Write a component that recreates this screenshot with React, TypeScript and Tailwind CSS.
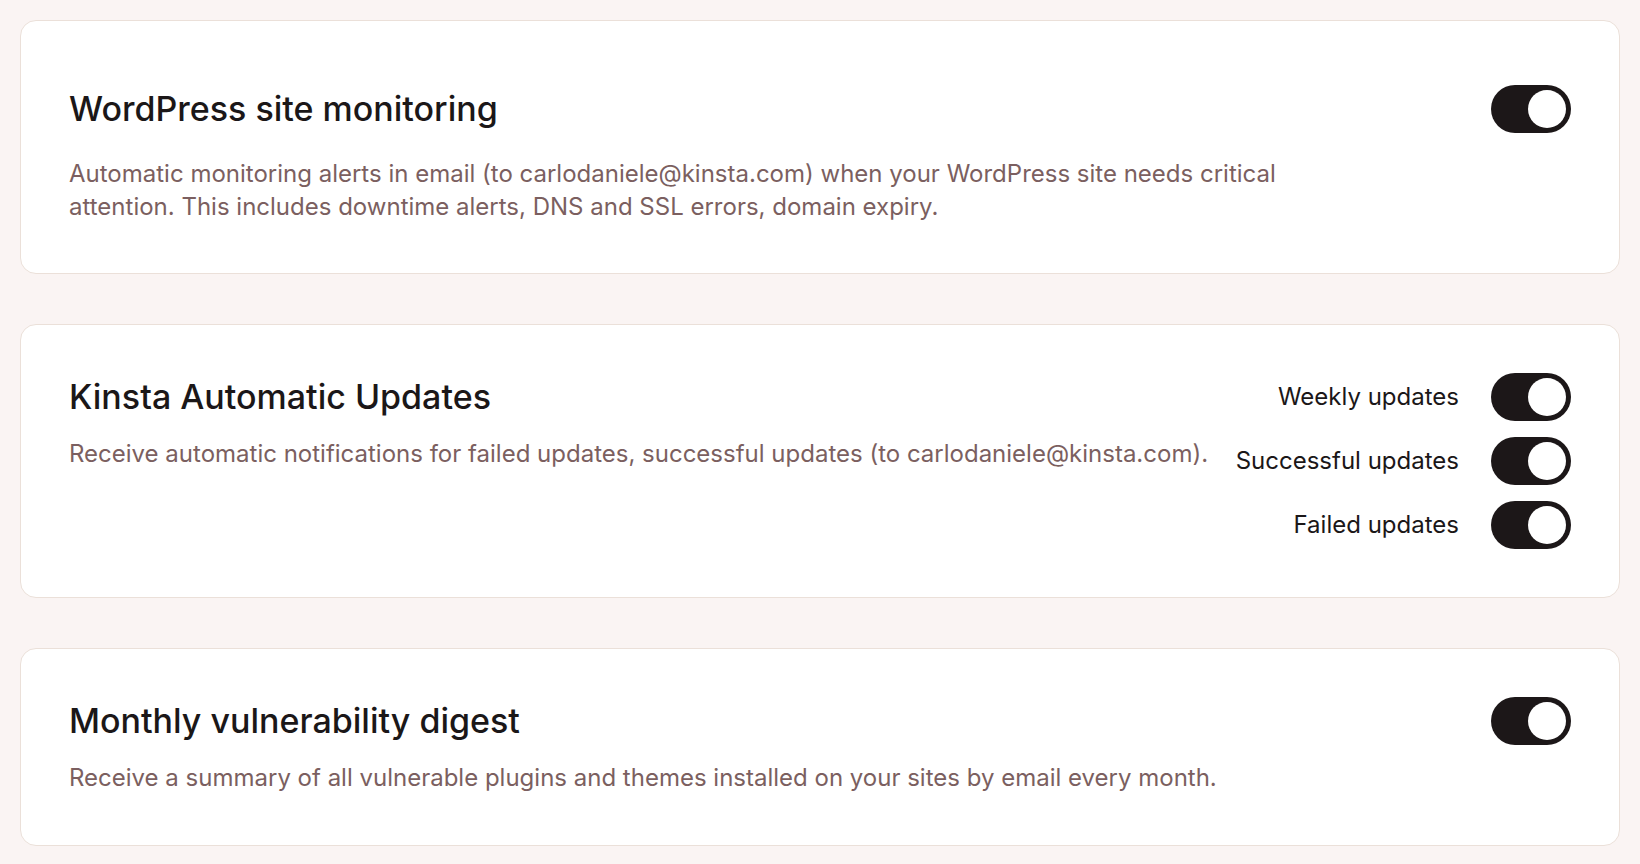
import React, { useState } from 'react';

// Simple on/off switch drawn like the Kinsta settings toggle
const Toggle = ({ on, onChange }: { on: boolean; onChange: () => void }) => (
  <button
    type="button"
    onClick={onChange}
    className={`flex h-12 w-20 shrink-0 items-center rounded-full p-[5px] ${on ? 'justify-end bg-[#1c1718]' : 'justify-start bg-[#d8cdca]'}`}
  >
    <span className="h-[38px] w-[38px] rounded-full bg-white" />
  </button>
);

const App = () => {
  const [monitoring, setMonitoring] = useState(true);
  const [weekly, setWeekly] = useState(true);
  const [successful, setSuccessful] = useState(true);
  const [failed, setFailed] = useState(true);
  const [digest, setDigest] = useState(true);

  const updates = [
    { label: 'Weekly updates', on: weekly, toggle: () => setWeekly(!weekly) },
    { label: 'Successful updates', on: successful, toggle: () => setSuccessful(!successful) },
    { label: 'Failed updates', on: failed, toggle: () => setFailed(!failed) },
  ];

  return (
    <div className="min-h-screen bg-[#faf4f3] p-5 font-['Inter',sans-serif]">
      <div className="flex flex-col gap-[50px]">
        {/* Site monitoring */}
        <div className="rounded-2xl border border-[#ebe0d9] bg-white px-12 pt-16 pb-[50px]">
          <div className="flex items-center justify-between">
            <h2 className="text-[34px] leading-10 font-medium text-[#1b1718]">WordPress site monitoring</h2>
            <Toggle on={monitoring} onChange={() => setMonitoring(!monitoring)} />
          </div>
          <p className="mt-6 max-w-[1260px] text-[24px] leading-[33px] text-[#7b5f60]">
            Automatic monitoring alerts in email (to carlodaniele@kinsta.com) when your WordPress site needs critical
            attention. This includes downtime alerts, DNS and SSL errors, domain expiry.
          </p>
        </div>

        {/* Automatic updates */}
        <div className="flex items-start justify-between gap-4 rounded-2xl border border-[#ebe0d9] bg-white px-12 py-12">
          <div className="min-w-0 pt-1">
            <h2 className="text-[34px] leading-10 font-medium text-[#1b1718]">Kinsta Automatic Updates</h2>
            <p className="mt-5 whitespace-nowrap text-[24px] leading-[33px] text-[#7b5f60]">
              Receive automatic notifications for failed updates, successful updates (to carlodaniele@kinsta.com).
            </p>
          </div>
          <div className="flex shrink-0 flex-col gap-4">
            {updates.map((u) => (
              <div key={u.label} className="flex items-center justify-end gap-8">
                <span className="text-[24px] text-[#1b1718]">{u.label}</span>
                <Toggle on={u.on} onChange={u.toggle} />
              </div>
            ))}
          </div>
        </div>

        {/* Vulnerability digest */}
        <div className="rounded-2xl border border-[#ebe0d9] bg-white px-12 pt-12 pb-[51px]">
          <div className="flex items-center justify-between">
            <h2 className="text-[34px] leading-10 font-medium text-[#1b1718]">Monthly vulnerability digest</h2>
            <Toggle on={digest} onChange={() => setDigest(!digest)} />
          </div>
          <p className="mt-4 text-[24px] leading-[33px] text-[#7b5f60]">
            Receive a summary of all vulnerable plugins and themes installed on your sites by email every month.
          </p>
        </div>
      </div>
    </div>
  );
};

export default App;
